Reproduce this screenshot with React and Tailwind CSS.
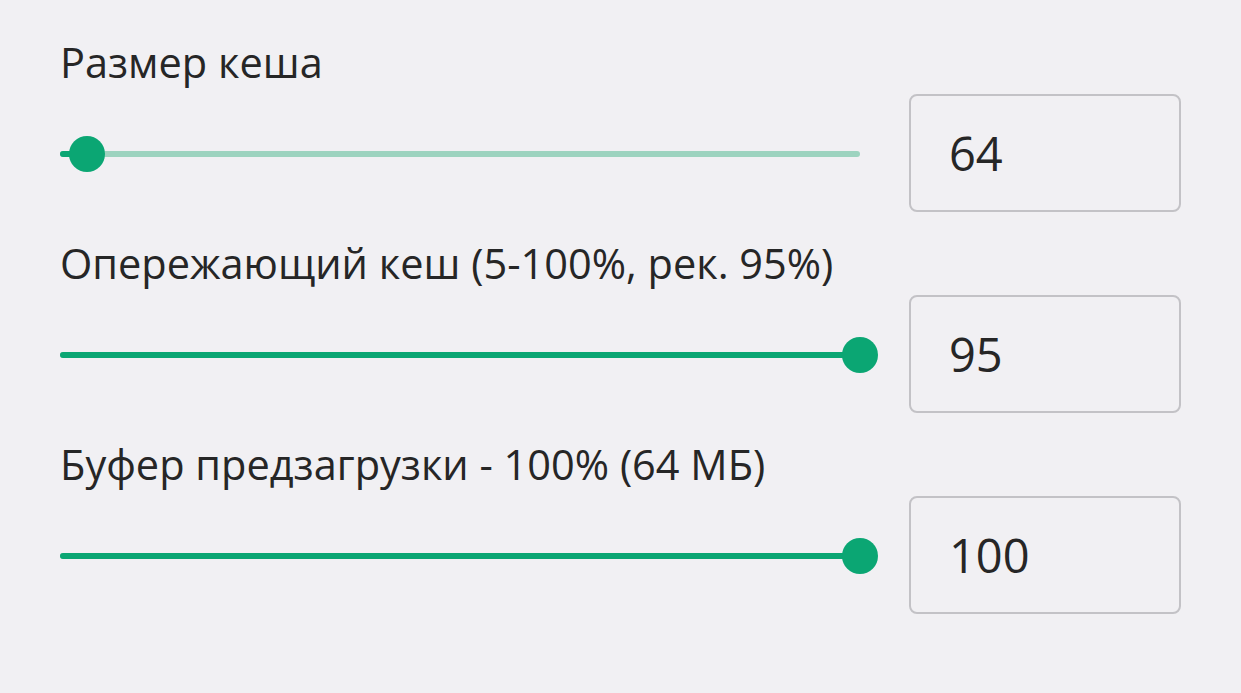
const rows = [
    { label: "Размер кеша", value: 64, pos: 27 },
    { label: "Опережающий кеш (5-100%, рек. 95%)", value: 95, pos: 800 },
    { label: "Буфер предзагрузки - 100% (64 МБ)", value: 100, pos: 800 },
];

function Slider({ pos }) {
    return (
        <div className="relative w-[818px] h-[38px] shrink-0">
            <div className="absolute left-0 top-[17px] w-[800px] h-[6px] rounded-full bg-[#9dd3bf]" />
            <div
                className="absolute left-0 top-[17px] h-[6px] rounded-full bg-[#0ba673]"
                style={{ width: pos }}
            />
            <div
                className="absolute top-[2px] w-9 h-9 rounded-full bg-[#0ba673]"
                style={{ left: pos - 18 }}
            />
        </div>
    );
}

export default function App() {
    return (
        <div
            className="w-[1241px] h-[693px] bg-[#f1f0f3] pl-[60px] pt-[38px] text-[#262626]"
            style={{ fontFamily: "'Open Sans', 'Noto Sans', sans-serif" }}
        >
            {rows.map((row) => (
                <div key={row.label} className="mb-[27px]">
                    <div className="text-[41.5px] leading-[48px]">{row.label}</div>
                    <div className="flex items-center gap-[31px] mt-[8px]">
                        <Slider pos={row.pos} />
                        <div className="w-[272px] h-[118px] border-2 border-[#c3c2c6] rounded-lg flex items-center pl-[38px] text-[47px]">
                            {row.value}
                        </div>
                    </div>
                </div>
            ))}
        </div>
    );
}
